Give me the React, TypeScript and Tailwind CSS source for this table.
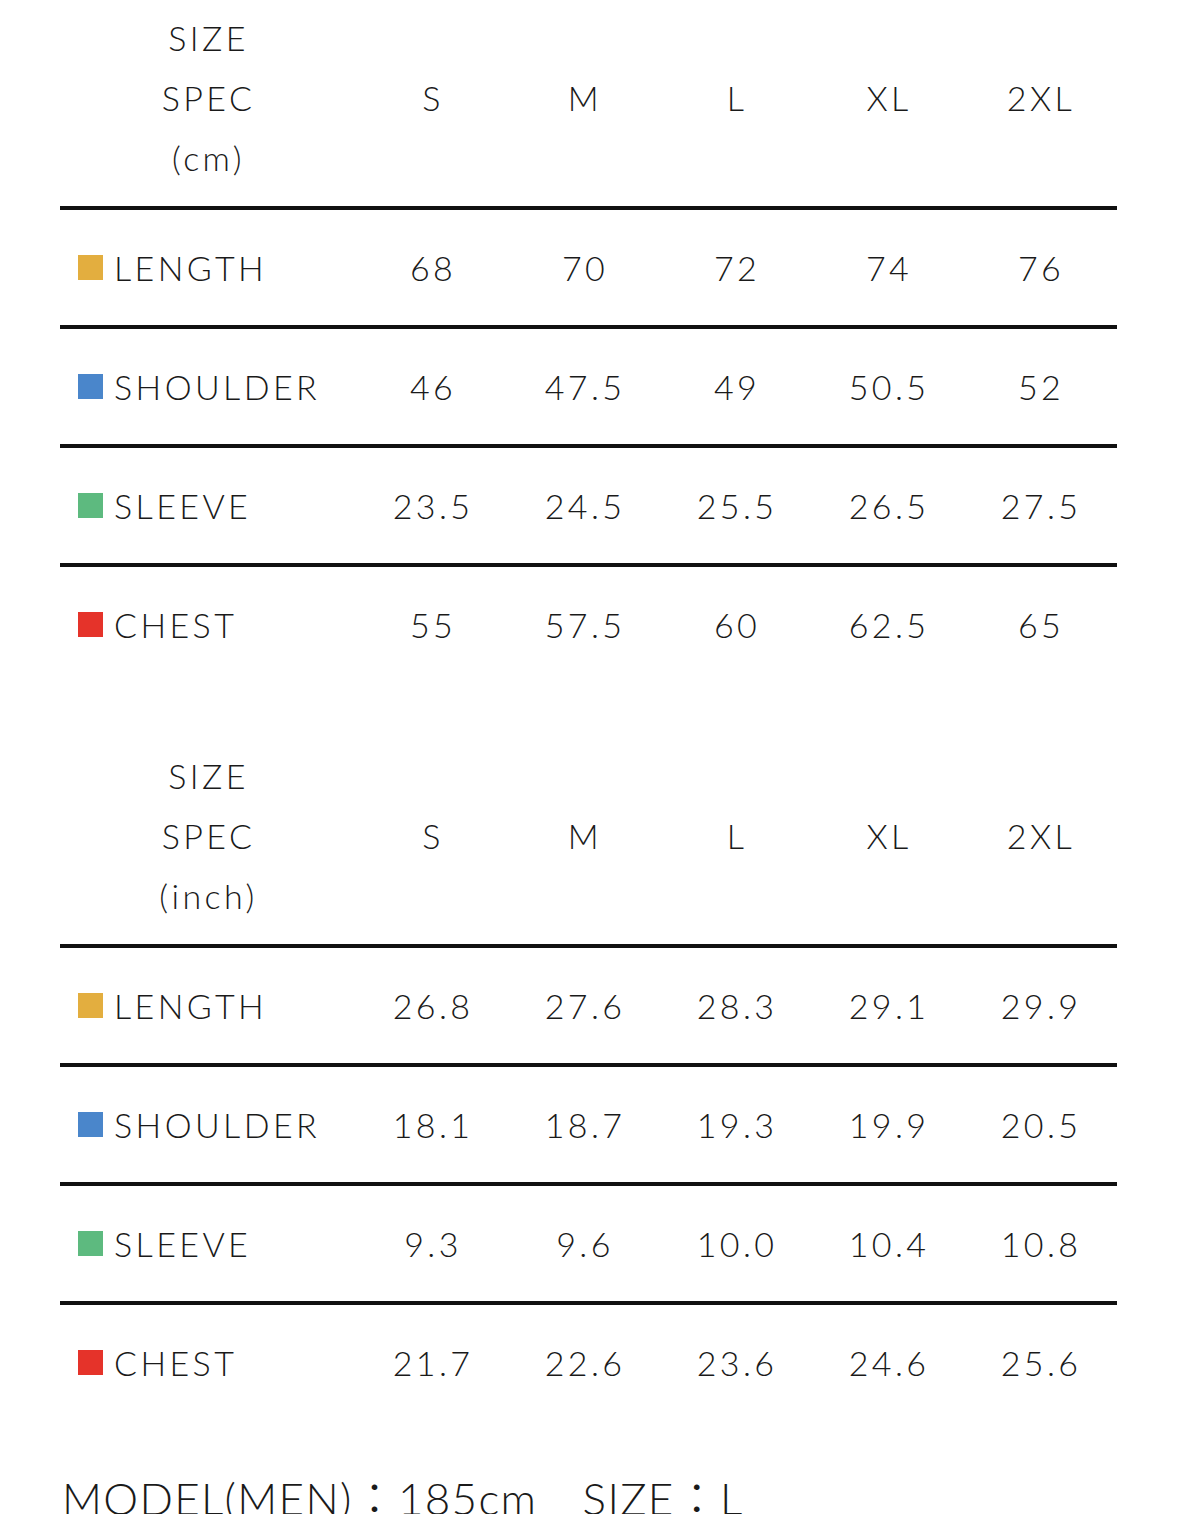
const SIZES = ["S", "M", "L", "XL", "2XL"];

type Row = { label: string; color: string; values: string[] };

const cmRows: Row[] = [
  { label: "LENGTH", color: "bg-[#e3ae3f]", values: ["68", "70", "72", "74", "76"] },
  { label: "SHOULDER", color: "bg-[#4a86cb]", values: ["46", "47.5", "49", "50.5", "52"] },
  { label: "SLEEVE", color: "bg-[#5dba7f]", values: ["23.5", "24.5", "25.5", "26.5", "27.5"] },
  { label: "CHEST", color: "bg-[#e5332a]", values: ["55", "57.5", "60", "62.5", "65"] },
];

const inchRows: Row[] = [
  { label: "LENGTH", color: "bg-[#e3ae3f]", values: ["26.8", "27.6", "28.3", "29.1", "29.9"] },
  { label: "SHOULDER", color: "bg-[#4a86cb]", values: ["18.1", "18.7", "19.3", "19.9", "20.5"] },
  { label: "SLEEVE", color: "bg-[#5dba7f]", values: ["9.3", "9.6", "10.0", "10.4", "10.8"] },
  { label: "CHEST", color: "bg-[#e5332a]", values: ["21.7", "22.6", "23.6", "24.6", "25.6"] },
];

const grid = "grid grid-cols-[297px_repeat(5,152px)]";

function SpecTable({ unit, rows }: { unit: string; rows: Row[] }) {
  return (
    <div className="w-[1057px]">
      <div className={`${grid} items-center pt-2 pb-[18px] border-b-4 border-[#111]`}>
        <div className="flex flex-col items-center leading-[60px]">
          <span>SIZE</span>
          <span>SPEC</span>
          <span>({unit})</span>
        </div>
        {SIZES.map((s) => (
          <div key={s} className="text-center leading-[60px]">
            {s}
          </div>
        ))}
      </div>
      {rows.map((row, i) => (
        <div
          key={row.label}
          className={`${grid} items-center ${i < rows.length - 1 ? "h-[119px] border-b-4 border-[#111]" : "h-[115px]"}`}
        >
          <div className="flex items-center pl-[18px]">
            <span className={`w-[25px] h-[25px] mr-[11px] ${row.color}`} />
            <span>{row.label}</span>
          </div>
          {row.values.map((v, j) => (
            <div key={j} className="text-center">
              {v}
            </div>
          ))}
        </div>
      ))}
    </div>
  );
}

export default function App() {
  return (
    <div
      className="w-[1179px] h-[1514px] overflow-hidden bg-white text-[#1a1a1a] pl-[60px] text-[34px] font-light tracking-[0.1em]"
      style={{ fontFamily: "Lato, 'Noto Sans CJK JP', sans-serif" }}
    >
      <SpecTable unit="cm" rows={cmRows} />
      <div className="h-[56px]" />
      <SpecTable unit="inch" rows={inchRows} />
      <div className="mt-[54px] pl-[2px] text-[44px] leading-[48px] tracking-[0.03em] whitespace-pre">
        MODEL(MEN)：185cm　SIZE：L
      </div>
    </div>
  );
}
